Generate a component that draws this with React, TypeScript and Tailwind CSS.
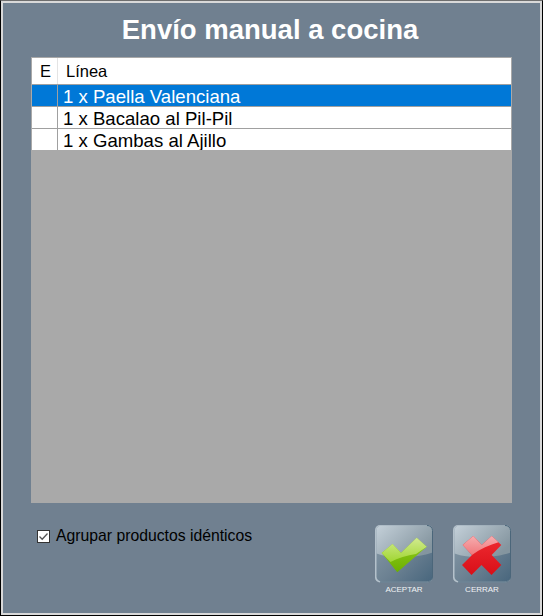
import React from "react";

function Face({ id }: { id: string }) {
  return (
    <>
      <defs>
        <linearGradient id={`${id}-base`} x1="0" y1="0" x2="1" y2="1">
          <stop offset="0" stopColor="#8b9dab" />
          <stop offset="0.55" stopColor="#6c8192" />
          <stop offset="1" stopColor="#48667d" />
        </linearGradient>
        <linearGradient id={`${id}-gloss`} x1="0" y1="0" x2="1" y2="0.6">
          <stop offset="0" stopColor="#c4d0d9" />
          <stop offset="1" stopColor="#84959f" />
        </linearGradient>
      </defs>
      <rect x="0" y="0" width="57.5" height="57.5" rx="5" fill="#b4c1cb" />
      <rect x="1.5" y="0.5" width="56" height="56" rx="5" fill={`url(#${id}-base)`} />
      <path d="M1.5 5.5a5 5 0 0 1 5-5h46a5 5 0 0 1 5 5v22c-14 5-40 7-56 1z" fill={`url(#${id}-gloss)`} />
      <path d="M52 .5a5 5 0 0 1 5.5 5V52a5 5 0 0 1-5 5H5" fill="none" stroke="#4b667a" strokeWidth="1" />
    </>
  );
}

function CheckIcon() {
  return (
    <svg width="58" height="58" viewBox="0 0 58 58">
      <Face id="ok" />
      <defs>
        <linearGradient id="ok-fill" x1="0" y1="0.2" x2="0" y2="1">
          <stop offset="0" stopColor="#8cc81a" />
          <stop offset="1" stopColor="#6cb000" />
        </linearGradient>
        <linearGradient id="ok-hi" x1="0" y1="0" x2="0" y2="1">
          <stop offset="0" stopColor="#d2ea90" />
          <stop offset="1" stopColor="#a0d632" />
        </linearGradient>
      </defs>
      <path d="M6.7 28 17.5 19 26 28 41.7 12.7 51.7 21.7 22.3 47.3z" fill="url(#ok-fill)" />
      <path d="M6.7 28 17.5 19 26 28 41.7 12.7 51.7 21.7 41 29C32 30.5 23 33 15.5 37z" fill="url(#ok-hi)" />
    </svg>
  );
}

function CrossIcon() {
  return (
    <svg width="58" height="58" viewBox="0 0 58 58">
      <Face id="no" />
      <defs>
        <linearGradient id="no-fill" x1="0" y1="0" x2="0" y2="1">
          <stop offset="0" stopColor="#f02c32" />
          <stop offset="1" stopColor="#d80f18" />
        </linearGradient>
        <linearGradient id="no-hi" x1="0" y1="0" x2="0" y2="1">
          <stop offset="0" stopColor="#f6adaf" />
          <stop offset="1" stopColor="#f0777b" />
        </linearGradient>
      </defs>
      <path d="M9.7 20 20.3 11 28.7 20 38.7 11 48.3 20 38.7 30 48.3 40 38.5 50 28.5 40 18.5 50 9 40 19 30z" fill="url(#no-fill)" />
      <path d="M9.7 20 20.3 11 28.7 20 38.7 11 45.5 17.3C37 20 27 24 19 30z" fill="url(#no-hi)" />
    </svg>
  );
}

function ActionButton({ icon, label }: { icon: React.ReactNode; label: string }) {
  return (
    <div className="flex w-[58px] flex-col items-center">
      {icon}
      <span className="mt-[2px] text-[8px] leading-[10px] whitespace-nowrap text-[#f0f3f5]">{label}</span>
    </div>
  );
}

const rows = ["1 x Paella Valenciana", "1 x Bacalao al Pil-Pil", "1 x Gambas al Ajillo"];

export default function App() {
  return (
    <div className="h-[616px] w-[543px] border border-black border-t-[#6e6e6e] bg-[#d9d9d9] p-[2px] font-['Liberation_Sans',Arial,sans-serif]">
      <div className="flex h-full flex-col bg-[#708090] pr-[28px] pl-[28px]">
        <h1 className="mt-[9px] mr-[3px] text-center text-[27.5px] leading-[36px] font-bold text-white">Envío manual a cocina</h1>
        <div className="mt-[9px] flex h-[446px] flex-col overflow-hidden border-t border-r border-l border-[#a9a9a9] bg-[#a9a9a9]">
          <div className="flex h-[26px] shrink-0 bg-white text-[16.5px] leading-[27px] text-black">
            <div className="w-[26px] border-r border-[#e4e4e4] pl-[2px] text-center">E</div>
            <div className="flex-1 pl-[8px]">Línea</div>
          </div>
          <div className="flex h-[22px] shrink-0 border-t border-[#a0a0a0] bg-[#0078d7] text-[18.6px] leading-[23px] text-white">
            <div className="w-[26px] border-r border-[#a0a0a0]"></div>
            <div className="flex-1 pl-[5px]">{rows[0]}</div>
          </div>
          {rows.slice(1).map((r) => (
            <div key={r} className="flex h-[22px] shrink-0 overflow-hidden border-t border-[#a0a0a0] bg-white text-[18.6px] leading-[23px] text-black">
              <div className="w-[26px] border-r border-[#a0a0a0]"></div>
              <div className="flex-1 pl-[5px]">{r}</div>
            </div>
          ))}
        </div>
        <div className="flex flex-1 items-start justify-between">
          <label className="mt-[24px] ml-[6px] flex items-center gap-[6px] text-[15.75px] leading-[18px] text-black">
            <span className="flex h-[13px] w-[13px] items-center justify-center border border-[#333333] bg-white">
              <svg width="11" height="11" viewBox="0 0 11 11">
                <path d="M1.5 5.5 4.2 8.2 9.5 2.5" fill="none" stroke="#555555" strokeWidth="1.3" />
              </svg>
            </span>
            Agrupar productos idénticos
          </label>
          <div className="mt-[22px] mr-[1px] flex gap-[20px]">
            <ActionButton icon={<CheckIcon />} label="ACEPTAR" />
            <ActionButton icon={<CrossIcon />} label="CERRAR" />
          </div>
        </div>
      </div>
    </div>
  );
}
